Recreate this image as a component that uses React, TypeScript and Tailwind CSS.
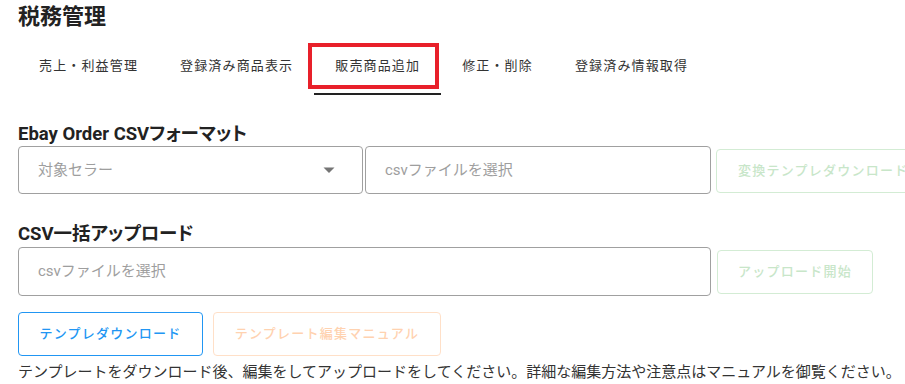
import React from "react";

const tabs = ["売上・利益管理", "登録済み商品表示", "販売商品追加", "修正・削除", "登録済み情報取得"];

function MenuDown() {
  return (
    <svg width="24" height="24" viewBox="0 0 24 24" className="shrink-0">
      <path d="M6.5 9.5h11l-5.5 5.5z" fill="#757575" />
    </svg>
  );
}

export default function App() {
  return (
    <div className="relative w-[905px] h-[384px] overflow-hidden bg-white pl-[18px] font-['Roboto','Noto_Sans_CJK_JP',sans-serif] text-[#333]">
      <h1 className="mt-[1px] text-[22px] leading-[32px] font-bold text-[#222]">税務管理</h1>

      <div className="mt-[10px] flex">
        {tabs.map((t, i) => (
          <div
            key={t}
            className={
              "h-[52px] px-[21px] pt-[14px] text-[13px] leading-[18px] tracking-[1.15px] whitespace-nowrap text-[#333] " +
              (i === 2 ? "border-b-2 border-[#222]" : "")
            }
          >
            {t}
          </div>
        ))}
      </div>

      <h2 className="mt-[27px] text-[18.5px] leading-[24px] font-bold text-[#222] [font-feature-settings:'palt']">
        Ebay Order CSVフォーマット
      </h2>
      <div className="flex items-start whitespace-nowrap">
        <div className="flex h-[48px] w-[345px] shrink-0 items-center justify-between rounded-[4px] border border-[#a0a0a0] pl-[19px] pr-[21px] text-[15px] text-[#9e9e9e]">
          <span>対象セラー</span>
          <MenuDown />
        </div>
        <div className="ml-[2px] flex h-[48px] w-[346px] shrink-0 items-center rounded-[4px] border border-[#a0a0a0] pl-[19px] text-[15px] text-[#9e9e9e]">
          csvファイルを選択
        </div>
        <button className="ml-[5px] mt-[3px] h-[44px] shrink-0 rounded-[4px] border border-[#d3ecd4] px-[21px] text-[13px] font-medium tracking-[1.25px] text-[#c8e6c9]">
          変換テンプレダウンロード
        </button>
      </div>

      <h2 className="mt-[28px] text-[18.5px] leading-[25px] font-bold text-[#222] [font-feature-settings:'palt']">
        CSV一括アップロード
      </h2>
      <div className="flex items-start whitespace-nowrap">
        <div className="flex h-[49px] w-[693px] shrink-0 items-center rounded-[4px] border border-[#a0a0a0] pl-[19px] text-[15px] text-[#9e9e9e]">
          csvファイルを選択
        </div>
        <button className="ml-[6px] mt-[3px] h-[44px] w-[156px] shrink-0 rounded-[4px] border border-[#d3ecd4] text-[13px] font-medium tracking-[1.25px] text-[#c8e6c9]">
          アップロード開始
        </button>
      </div>

      <div className="mt-[16px] flex gap-[10px] whitespace-nowrap">
        <button className="h-[44px] w-[185px] rounded-[4px] border border-[#2196f3] text-[13px] font-medium tracking-[1.25px] text-[#2196f3]">
          テンプレダウンロード
        </button>
        <button className="h-[44px] w-[228px] rounded-[4px] border border-[#ffe0c8] text-[13px] font-medium tracking-[1.25px] text-[#ffd2b0]">
          テンプレート編集マニュアル
        </button>
      </div>

      <p className="mt-[6px] whitespace-nowrap text-[15px] leading-[20px] text-[#333]">
        テンプレートをダウンロード後、編集をしてアップロードをしてください。詳細な編集方法や注意点はマニュアルを御覧ください。
      </p>

      <div className="pointer-events-none absolute left-[308px] top-[43px] h-[46px] w-[131px] border-4 border-[#e8202a]" />
    </div>
  );
}
